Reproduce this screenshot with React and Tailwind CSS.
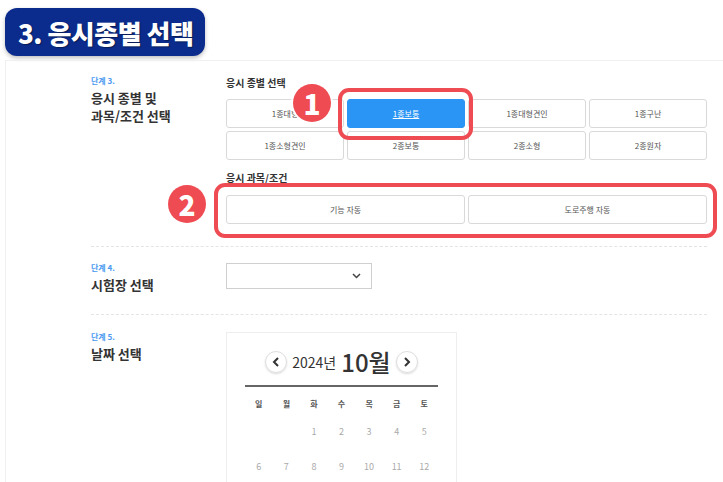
const kinds = ['1종대형', '1종보통', '1종대형견인', '1종구난', '1종소형견인', '2종보통', '2종소형', '2종원자'];
const days = ['일', '월', '화', '수', '목', '금', '토'];
const dates = [null, null, 1, 2, 3, 4, 5, 6, 7, 8, 9, 10, 11, 12];

function StepLabel({ step, children }) {
  return (
    <div className="w-[135px] shrink-0">
      <div className="text-[8px] font-bold leading-[10px] text-[#4a9af0]">단계 {step}.</div>
      <div className="mt-[3px] text-[13px] font-bold leading-[18px] text-[#333]">{children}</div>
    </div>
  );
}

function Marker({ n, className }) {
  return (
    <span className={`absolute z-20 flex h-[38px] w-[38px] items-center justify-center rounded-full bg-[#ef4b52] text-[28px] font-black leading-none text-white ring-2 ring-white ${className}`}>
      {n}
    </span>
  );
}

export default function App() {
  return (
    <div className="relative h-[482px] w-[723px] overflow-hidden bg-white font-['Noto_Sans_CJK_KR',sans-serif]">
      {/* title badge */}
      <div className="pl-[5px] pt-[8px]">
        <div className="flex h-[48px] w-[200px] items-center rounded-[12px] bg-[#0b2c8c] pl-[13px] shadow-[0_2px_4px_rgba(0,0,0,0.25)]">
          <span className="text-[26px] font-black tracking-[-0.5px] text-white [text-shadow:1px_1px_1px_rgba(0,0,0,0.4)]">3. 응시종별 선택</span>
        </div>
      </div>

      {/* panel */}
      <div className="ml-[5px] mt-[4px] border-l border-t border-[#f0f0f0] pl-[85px] pr-[16px]">
        {/* step 3 */}
        <div className="flex border-b border-dashed border-[#e4e4e4] pb-[22px] pt-[15px]">
          <StepLabel step={3}>
            응시 종별 및<br />과목/조건 선택
          </StepLabel>
          <div className="flex-1">
            <div className="text-[10px] font-bold leading-[14px] text-[#333]">응시 종별 선택</div>
            <div className="mt-[9px] grid grid-cols-4 gap-[3px]">
              {kinds.map((k, i) => (
                <div key={k} className="relative">
                  {i === 1 && (
                    <>
                      <span className="absolute -bottom-[12px] -left-[9px] -right-[8px] -top-[11px] z-10 rounded-[11px] border-[4px] border-[#ef4b52]" />
                      <Marker n="1" className="-left-[54px] -top-[15px]" />
                    </>
                  )}
                  <button
                    className={`flex h-[29px] w-full items-center justify-center rounded-[3px] border text-[8px] ${
                      i === 1 ? 'border-[#2b95f5] bg-[#2b95f5] text-white underline' : 'border-[#d9d9d9] bg-white text-[#555]'
                    }`}
                  >
                    {k}
                  </button>
                </div>
              ))}
            </div>
            <div className="mt-[11px] text-[10px] font-bold leading-[14px] text-[#333]">응시 과목/조건</div>
            <div className="relative mt-[10px] grid grid-cols-2 gap-[3px]">
              <span className="absolute -bottom-[14px] -left-[12px] -right-[10px] -top-[12px] z-10 rounded-[11px] border-[4px] border-[#ef4b52]" />
              <Marker n="2" className="-left-[58px] -top-[10px]" />
              <button className="flex h-[29px] items-center justify-center rounded-[3px] border border-[#d9d9d9] bg-white text-[8px] text-[#555]">기능 자동</button>
              <button className="flex h-[29px] items-center justify-center rounded-[3px] border border-[#d9d9d9] bg-white text-[8px] text-[#555]">도로주행 자동</button>
            </div>
          </div>
        </div>

        {/* step 4 */}
        <div className="flex border-b border-dashed border-[#e4e4e4] pb-[20px] pt-[16px]">
          <StepLabel step={4}>시험장 선택</StepLabel>
          <div className="flex-1">
            <div className="flex h-[26px] w-[146px] items-center justify-end border border-[#cfcfcf] bg-white pr-[10px] text-[#444]">
              <svg width="9" height="6" viewBox="0 0 9 6" fill="none" stroke="currentColor" strokeWidth="1.5">
                <path d="M1 1l3.5 3.5L8 1" />
              </svg>
            </div>
          </div>
        </div>

        {/* step 5 */}
        <div className="flex pt-[17px]">
          <StepLabel step={5}>날짜 선택</StepLabel>
          <div className="flex-1">
            <div className="h-[160px] w-[231px] border border-[#eeeeee] bg-white px-[18px] pt-[14px]">
              <div className="flex items-center justify-center gap-[5px] border-b-2 border-[#666] pb-[8px]">
                <span className="flex h-[22px] w-[22px] items-center justify-center rounded-full border border-[#ddd] text-[#333] shadow-[0_1px_2px_rgba(0,0,0,0.15)]">
                  <svg width="8" height="10" viewBox="0 0 8 10" fill="none" stroke="currentColor" strokeWidth="2">
                    <path d="M6 1L2 5l4 4" />
                  </svg>
                </span>
                <span className="text-[14px] text-[#333]">2024년</span>
                <span className="text-[24px] font-medium leading-[30px] text-[#333]">10월</span>
                <span className="flex h-[22px] w-[22px] items-center justify-center rounded-full border border-[#ddd] text-[#333] shadow-[0_1px_2px_rgba(0,0,0,0.15)]">
                  <svg width="8" height="10" viewBox="0 0 8 10" fill="none" stroke="currentColor" strokeWidth="2">
                    <path d="M2 1l4 4-4 4" />
                  </svg>
                </span>
              </div>
              <div className="mt-[10px] grid grid-cols-7">
                {days.map((d) => (
                  <div key={d} className="text-center text-[8px] font-bold leading-[14px] text-[#555]">{d}</div>
                ))}
              </div>
              <div className="grid grid-cols-7 gap-y-[21px] pt-[14px]">
                {dates.map((d, i) => (
                  <div key={i} className="h-[14px] text-center text-[9px] leading-[14px] text-[#aaa]">{d}</div>
                ))}
              </div>
            </div>
          </div>
        </div>
      </div>
    </div>
  );
}
